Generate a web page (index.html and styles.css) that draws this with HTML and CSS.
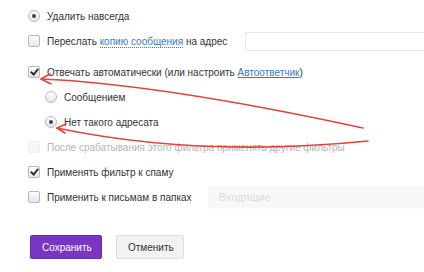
FILE: index.html
```html
<!DOCTYPE html>
<html lang="ru">
<head>
  <meta charset="UTF-8" />
  <meta name="viewport" content="width=device-width, initial-scale=1.0">
  <title>Фильтр</title>
  <link rel="stylesheet" href="styles.css">
</head>
<body>

  <form class="filter">
    <label class="row">
      <span class="radio checked"></span>
      <span>Удалить навсегда</span>
    </label>

    <label class="row">
      <span class="box"></span>
      <span>Переслать <a class="dotted" href="#">копию сообщения</a> на адрес</span>
      <input class="addr" type="text">
    </label>

    <label class="row gap-top">
      <span class="box checked"></span>
      <span>Отвечать автоматически (или настроить <a class="link" href="#">Автоответчик</a>)</span>
    </label>

    <label class="row sub">
      <span class="radio"></span>
      <span>Сообщением</span>
    </label>

    <label class="row sub">
      <span class="radio checked"></span>
      <span>Нет такого адресата</span>
    </label>

    <label class="row disabled">
      <span class="box"></span>
      <span>После срабатывания этого фильтра применять другие фильтры</span>
    </label>

    <label class="row">
      <span class="box checked"></span>
      <span>Применять фильтр к спаму</span>
    </label>

    <label class="row">
      <span class="box"></span>
      <span>Применить к письмам в папках</span>
      <span class="folder">Входящие</span>
    </label>

    <div class="buttons">
      <button type="button" class="btn save">Сохранить</button>
      <button type="button" class="btn cancel">Отменить</button>
    </div>
  </form>

  <!-- стрелки поверх скриншота -->
  <svg class="arrows" width="424" height="272" viewBox="0 0 424 272">
    <g fill="none" stroke="#e0443c" stroke-width="1.6" stroke-linecap="round" stroke-linejoin="round">
      <path d="M363 128 Q160 84 41 79" />
      <path d="M50 74 L41 79 L51 84" />
      <path d="M368 141 Q200 158 57 128" />
      <path d="M66 124 L57 128 L65 133" />
    </g>
  </svg>

</body>
</html>
```

FILE: styles.css
```css
body {
  margin: 0;
  font-family: "Liberation Sans", Arial, sans-serif;
  font-size: 10px;
  color: #333;
  background: #fff;
  overflow: hidden;
  position: relative;
}

.filter {
  display: flex;
  flex-direction: column;
  gap: 11px;
  padding: 9px 0 0 28px;
}

.row {
  display: flex;
  align-items: center;
  height: 14px;
  gap: 7px;
  white-space: nowrap;
}

.row.gap-top {
  margin-top: 6px;
}

.row.sub {
  padding-left: 17px;
}

.row.disabled {
  color: #b5b5b5;
}

.box, .radio {
  flex: none;
  width: 10px;
  height: 10px;
  border: 1px solid #b9b9b9;
  background: linear-gradient(#fdfdfd, #e6e6e6);
  box-sizing: content-box;
  position: relative;
}

.box {
  border-radius: 2px;
}

.radio {
  border-radius: 50%;
}

.box.checked::after {
  content: "";
  position: absolute;
  left: 3px;
  top: 0;
  width: 3px;
  height: 6px;
  border: solid #333;
  border-width: 0 2px 2px 0;
  transform: rotate(40deg);
}

.radio.checked::after {
  content: "";
  position: absolute;
  left: 3px;
  top: 3px;
  width: 4px;
  height: 4px;
  border-radius: 50%;
  background: #444;
}

.disabled .box {
  border-color: #f0f0f0;
  background: #f7f7f7;
}

a {
  color: #3a78c3;
  text-decoration: none;
}

a.dotted {
  border-bottom: 1px dotted #3a78c3;
}

a.link {
  text-decoration: underline;
}

.addr {
  flex: 1;
  min-width: 0;
  height: 19px;
  margin-left: 11px;
  border: 1px solid #e6e6e6;
  border-right: 0;
  border-radius: 2px 0 0 2px;
  box-sizing: border-box;
}

.folder {
  flex: 1;
  height: 23px;
  margin-left: 9px;
  padding-left: 11px;
  line-height: 23px;
  background: #f8f8f8;
  color: #dcdcdc;
  font-size: 11px;
}

.buttons {
  display: flex;
  gap: 14px;
  margin: 20px 0 0 2px;
}

.btn {
  height: 24px;
  padding: 0 11px;
  font-family: inherit;
  font-size: 10px;
  border-radius: 2px;
  cursor: pointer;
}

.save {
  width: 72px;
  background: #7a35c2;
  border: 1px solid #6c2bb3;
  color: #fff;
}

.cancel {
  width: 68px;
  background: #f2f2f2;
  border: 1px solid #dedede;
  color: #333;
}

.arrows {
  position: absolute;
  left: 0;
  top: 0;
  pointer-events: none;
}
```
